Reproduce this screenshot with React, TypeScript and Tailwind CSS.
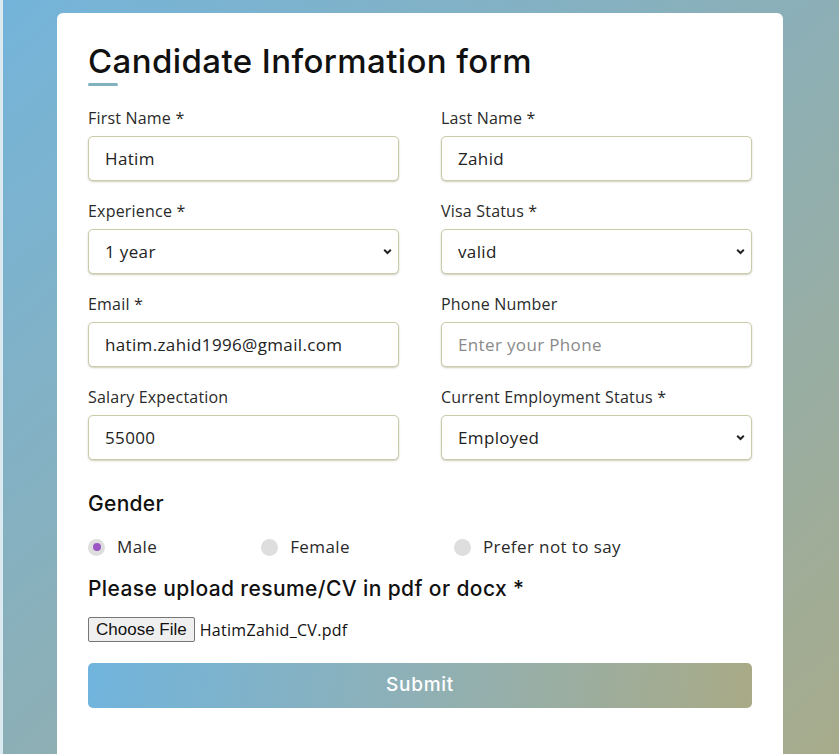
import React from "react";

const font = { fontFamily: '"Open Sans", "Noto Sans", sans-serif' };
const headFont = { fontFamily: 'Inter, "Open Sans", sans-serif' };

function Field({ label, children }: { label: string; children: React.ReactNode }) {
  return (
    <div className="flex flex-col">
      <label className="text-[16px] leading-[22px] mb-[7px] text-[#2a2a2a] tracking-[0.2px]">{label}</label>
      {children}
    </div>
  );
}

const boxCls =
  "h-[45px] w-full rounded-[5px] border border-[#cbcaa9] bg-white px-[16px] text-[17px] tracking-[0.35px] text-[#222] shadow-[0_1px_2px_rgba(110,110,70,0.35)] outline-none";

function TextInput({ value, placeholder }: { value?: string; placeholder?: string }) {
  return (
    <input
      className={boxCls + " placeholder:text-[#8a8a8a]"}
      defaultValue={value}
      placeholder={placeholder}
      style={font}
    />
  );
}

function Select({ value }: { value: string }) {
  return (
    <div className="relative">
      <select className={boxCls + " appearance-none"} defaultValue={value} style={font}>
        <option value={value}>{value}</option>
      </select>
      <svg
        className="pointer-events-none absolute right-[7px] top-[19px]"
        width="9"
        height="7"
        viewBox="0 0 9 7"
      >
        <path d="M1.2 1.8 L4.5 5 L7.8 1.8" fill="none" stroke="#222" strokeWidth="2" />
      </svg>
    </div>
  );
}

function Radio({ label, checked }: { label: string; checked?: boolean }) {
  return (
    <div className="flex items-center gap-[12px]">
      <span className="flex h-[17px] w-[17px] items-center justify-center rounded-full bg-[#dedede]">
        {checked && <span className="h-[8px] w-[8px] rounded-full bg-[#9b55c4]" />}
      </span>
      <span className="text-[17px] tracking-[0.4px] text-[#2a2a2a]">{label}</span>
    </div>
  );
}

export default function App() {
  return (
    <div
      className="min-h-[754px] w-full border-l-[3px] border-l-[#dbe9f1] bg-[linear-gradient(to_bottom_right,#74b4da_0%,#8cafb6_50%,#a7ab8b_100%)] pt-[13px] pl-[54px] pr-[56px]"
      style={font}
    >
      <div className="min-h-[741px] rounded-t-[6px] bg-white px-[31px] pt-[28px] pb-[40px]">
        <h1 className="text-[33px] leading-[40px] font-medium text-[#111] tracking-[0.4px]" style={headFont}>
          Candidate Information form
        </h1>
        <div className="mt-[2px] h-[3px] w-[30px] rounded-full bg-[#7fb1bf]" />

        <div className="mt-[21px] grid grid-cols-2 gap-x-[42px] gap-y-[19px]">
          <Field label="First Name *">
            <TextInput value="Hatim" />
          </Field>
          <Field label="Last Name *">
            <TextInput value="Zahid" />
          </Field>
          <Field label="Experience *">
            <Select value="1 year" />
          </Field>
          <Field label="Visa Status *">
            <Select value="valid" />
          </Field>
          <Field label="Email *">
            <TextInput value="hatim.zahid1996@gmail.com" />
          </Field>
          <Field label="Phone Number">
            <TextInput placeholder="Enter your Phone" />
          </Field>
          <Field label="Salary Expectation">
            <TextInput value="55000" />
          </Field>
          <Field label="Current Employment Status *">
            <Select value="Employed" />
          </Field>
        </div>

        <h2 className="mt-[30px] text-[21px] leading-[28px] font-medium text-[#111] tracking-[0.3px]" style={headFont}>
          Gender
        </h2>
        <div className="mt-[17px] flex h-[24px] items-center gap-[104px]">
          <Radio label="Male" checked />
          <Radio label="Female" />
          <Radio label="Prefer not to say" />
        </div>

        <h2 className="mt-[16px] text-[21px] leading-[28px] font-medium text-[#111] tracking-[0.4px]" style={headFont}>
          Please upload resume/CV in pdf or docx *
        </h2>
        <div className="mt-[14px] flex h-[25px] items-center gap-[5px]">
          <button
            className="h-[25px] rounded-[2px] border border-[#767676] bg-[#efefef] px-[7px] text-[17px] leading-[20px] text-[#111]"
            style={{ fontFamily: '"Liberation Sans", Arial, sans-serif' }}
          >
            Choose File
          </button>
          <span className="text-[16px] tracking-[0.3px] text-[#111]">HatimZahid_CV.pdf</span>
        </div>

        <button
          className="mt-[21px] h-[45px] w-full rounded-[5px] bg-[linear-gradient(100deg,#70b4dd_0%,#8fb0b5_50%,#a9aa86_100%)] text-[19px] font-medium tracking-[0.7px] text-white"
          style={headFont}
        >
          Submit
        </button>
      </div>
    </div>
  );
}
